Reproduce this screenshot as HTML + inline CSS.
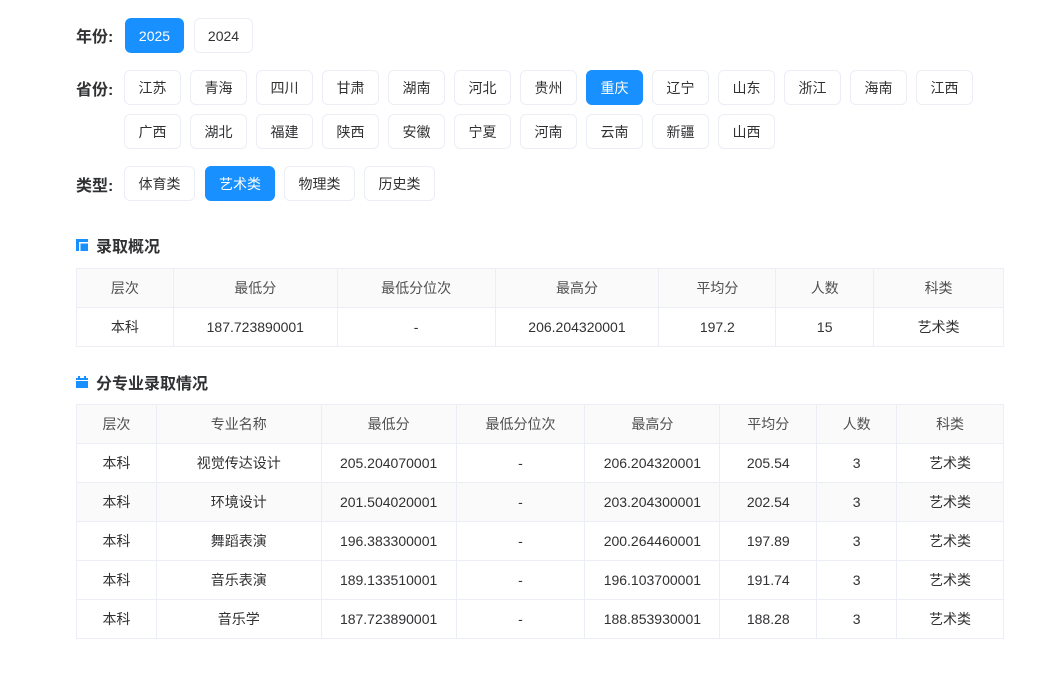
<!DOCTYPE html>
<html><head><meta charset="utf-8"><style>
*{margin:0;padding:0;box-sizing:border-box}
body{width:1045px;height:699px;background:#fff;font-family:"Liberation Sans","Noto Sans CJK SC",sans-serif;color:#303133;position:relative;overflow:hidden}
.lbl{position:absolute;left:76px;font-size:16px;font-weight:bold;color:#303133}
.b{position:absolute;height:35px;border:1px solid #ebeef5;border-radius:6px;font-size:14px;color:#303133;display:flex;align-items:center;justify-content:center;background:#fff}
.b.on{background:#1890ff;border-color:#1890ff;color:#fff}
.t{position:absolute;left:76px;font-size:16px;font-weight:bold;color:#303133;display:flex;align-items:center}
table{position:absolute;left:76px;width:928px;border-collapse:collapse;font-size:14px;color:#303133}
td{border:1px solid #ebeef5;height:39px;text-align:center;padding:0}
tr.h td{background:#fafafa;color:#505050}
tr.g td{background:#fafafa}
</style></head><body>
<div class="lbl" style="top:23px">年份:</div>
<div class="b on" style="left:125px;top:18px;width:59px">2025</div>
<div class="b" style="left:194px;top:18px;width:59px">2024</div>
<div class="lbl" style="top:76px">省份:</div>
<div class="b" style="left:124px;top:70px;width:57px">江苏</div>
<div class="b" style="left:190px;top:70px;width:57px">青海</div>
<div class="b" style="left:256px;top:70px;width:57px">四川</div>
<div class="b" style="left:322px;top:70px;width:57px">甘肃</div>
<div class="b" style="left:388px;top:70px;width:57px">湖南</div>
<div class="b" style="left:454px;top:70px;width:57px">河北</div>
<div class="b" style="left:520px;top:70px;width:57px">贵州</div>
<div class="b on" style="left:586px;top:70px;width:57px">重庆</div>
<div class="b" style="left:652px;top:70px;width:57px">辽宁</div>
<div class="b" style="left:718px;top:70px;width:57px">山东</div>
<div class="b" style="left:784px;top:70px;width:57px">浙江</div>
<div class="b" style="left:850px;top:70px;width:57px">海南</div>
<div class="b" style="left:916px;top:70px;width:57px">江西</div>
<div class="b" style="left:124px;top:114px;width:57px">广西</div>
<div class="b" style="left:190px;top:114px;width:57px">湖北</div>
<div class="b" style="left:256px;top:114px;width:57px">福建</div>
<div class="b" style="left:322px;top:114px;width:57px">陕西</div>
<div class="b" style="left:388px;top:114px;width:57px">安徽</div>
<div class="b" style="left:454px;top:114px;width:57px">宁夏</div>
<div class="b" style="left:520px;top:114px;width:57px">河南</div>
<div class="b" style="left:586px;top:114px;width:57px">云南</div>
<div class="b" style="left:652px;top:114px;width:57px">新疆</div>
<div class="b" style="left:718px;top:114px;width:57px">山西</div>
<div class="lbl" style="top:172px">类型:</div>
<div class="b" style="left:124px;top:166px;width:71px">体育类</div>
<div class="b on" style="left:205px;top:166px;width:70px">艺术类</div>
<div class="b" style="left:284px;top:166px;width:71px">物理类</div>
<div class="b" style="left:364px;top:166px;width:71px">历史类</div>

<div class="t" style="top:233px"><svg width="12" height="12" style="margin-right:8px"><rect x="0" y="0" width="12" height="12" fill="#1890ff"/><rect x="3" y="3" width="1.5" height="9" fill="#fff"/><rect x="3" y="3" width="9" height="1.5" fill="#fff"/></svg>录取概况</div>
<table style="top:268px">
<colgroup><col style="width:97px"><col style="width:164px"><col style="width:158px"><col style="width:164px"><col style="width:117px"><col style="width:98px"><col style="width:130px"></colgroup>
<tr class="h"><td>层次</td><td>最低分</td><td>最低分位次</td><td>最高分</td><td>平均分</td><td>人数</td><td>科类</td></tr>
<tr><td>本科</td><td>187.723890001</td><td>-</td><td>206.204320001</td><td>197.2</td><td>15</td><td>艺术类</td></tr>
</table>

<div class="t" style="top:370px"><svg width="12" height="12" style="margin-right:8px"><rect x="0" y="2" width="12" height="10" fill="#1890ff"/><rect x="2" y="0" width="2" height="3" fill="#1890ff"/><rect x="8" y="0" width="2" height="3" fill="#1890ff"/><rect x="0" y="4" width="12" height="1" fill="#fff"/></svg>分专业录取情况</div>
<table style="top:404px">
<colgroup><col style="width:80px"><col style="width:165px"><col style="width:135px"><col style="width:129px"><col style="width:135px"><col style="width:97px"><col style="width:80px"><col style="width:107px"></colgroup>
<tr class="h"><td>层次</td><td>专业名称</td><td>最低分</td><td>最低分位次</td><td>最高分</td><td>平均分</td><td>人数</td><td>科类</td></tr>
<tr><td>本科</td><td>视觉传达设计</td><td>205.204070001</td><td>-</td><td>206.204320001</td><td>205.54</td><td>3</td><td>艺术类</td></tr>
<tr class="g"><td>本科</td><td>环境设计</td><td>201.504020001</td><td>-</td><td>203.204300001</td><td>202.54</td><td>3</td><td>艺术类</td></tr>
<tr><td>本科</td><td>舞蹈表演</td><td>196.383300001</td><td>-</td><td>200.264460001</td><td>197.89</td><td>3</td><td>艺术类</td></tr>
<tr><td>本科</td><td>音乐表演</td><td>189.133510001</td><td>-</td><td>196.103700001</td><td>191.74</td><td>3</td><td>艺术类</td></tr>
<tr><td>本科</td><td>音乐学</td><td>187.723890001</td><td>-</td><td>188.853930001</td><td>188.28</td><td>3</td><td>艺术类</td></tr>
</table>
</body></html>
